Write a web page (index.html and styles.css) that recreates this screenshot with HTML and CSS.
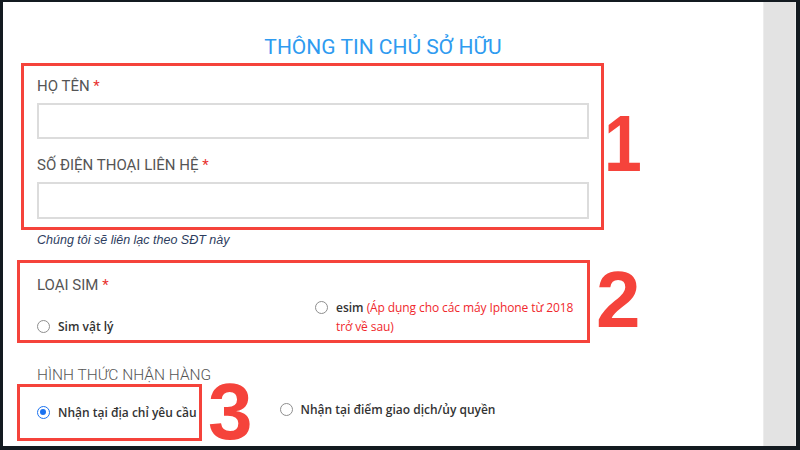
FILE: index.html
```html
<!DOCTYPE html>
<html lang="vi">
<head>
<meta charset="utf-8">
<link rel="stylesheet" href="styles.css">
</head>
<body>
<div class="frame">
  <main class="page">
    <h1 class="title">THÔNG TIN CHỦ SỞ HỮU</h1>

    <div class="row row-1">
      <section class="mark mark-1">
        <label class="lbl">HỌ TÊN <span class="req">*</span></label>
        <div class="input"></div>
        <label class="lbl lbl-2">SỐ ĐIỆN THOẠI LIÊN HỆ <span class="req">*</span></label>
        <div class="input input-2"></div>
      </section>
      <div class="num num-1">1</div>
    </div>
    <p class="hint">Chúng tôi sẽ liên lạc theo SĐT này</p>

    <div class="row row-2">
      <section class="mark mark-2">
        <label class="lbl">LOẠI SIM <span class="req">*</span></label>
        <div class="choices">
          <div class="opt opt-sim"><span class="radio"></span><span class="otext">Sim vật lý</span></div>
          <div class="opt opt-esim"><span class="radio"></span><span class="otext">esim <span class="red">(Áp dụng cho các máy Iphone từ 2018 trở về sau)</span></span></div>
        </div>
      </section>
      <div class="num num-2">2</div>
    </div>

    <div class="lbl lbl-3">HÌNH THỨC NHẬN HÀNG</div>
    <div class="row row-3">
      <section class="mark mark-3">
        <div class="opt"><span class="radio checked"></span><span class="otext">Nhận tại địa chỉ yêu cầu</span></div>
      </section>
      <div class="num num-3">3</div>
      <div class="opt opt-other"><span class="radio"></span><span class="otext">Nhận tại điểm giao dịch/ủy quyền</span></div>
    </div>
  </main>
  <aside class="side"></aside>
</div>
</body>
</html>
```
FILE: styles.css
```css
* { box-sizing: border-box; }
html, body { margin: 0; padding: 0; }
body {
  width: 800px;
  height: 450px;
  overflow: hidden;
  background: #131a20;
  font-family: Roboto, "Liberation Sans", sans-serif;
}
.frame {
  display: flex;
  height: 450px;
  padding: 2px 4px 4px 3px;
}
.page {
  width: 760px;
  background: #ffffff;
  padding-left: 14px;
  overflow: hidden;
}
.side {
  width: 33px;
  background: #e3e3e3;
  border-left: 1px solid #ececec;
  border-right: 1px solid #ececec;
}
.title {
  margin: 0 0 0 -14px;
  padding-top: 33px;
  text-align: center;
  font-weight: 400;
  font-size: 21px;
  line-height: 24px;
  color: #2f9bf0;
  height: 61px;
}
.row { display: flex; align-items: center; }
.mark { border: 3px solid #f5433b; }
.mark-1 {
  margin-left: 4px;
  width: 583px;
  padding: 11px 12px 8px 13px;
}
.lbl {
  display: block;
  font-size: 15px;
  line-height: 18px;
  color: #555555;
}
.req { color: #e8322f; }
.input {
  margin-top: 8px;
  height: 36px;
  border: 2px solid #dcdcdc;
  background: #fff;
}
.lbl-2 { margin-top: 17px; }
.input-2 { height: 37px; }
.num {
  font-family: "Liberation Sans", Arial, sans-serif;
  font-weight: 700;
  font-size: 80px;
  line-height: 1;
  color: #f5433b;
}
.num-1 { margin-left: 0px; margin-top: -6px; transform: scaleX(0.85); transform-origin: left center; }
.hint {
  margin: 3px 0 0 20px;
  font-family: "Liberation Sans", Arial, sans-serif;
  font-style: italic;
  font-size: 12.5px;
  line-height: 14px;
  color: #2d3d5e;
  height: 16px;
}
.row-2 { margin-top: 11px; }
.mark-2 {
  width: 573px;
  height: 83px;
  padding: 13px 0 0 17px;
}
.choices {
  display: flex;
  align-items: flex-end;
  margin-top: 4px;
}
.opt {
  display: flex;
  align-items: flex-start;
  font-family: "Open Sans", "Liberation Sans", sans-serif;
  font-size: 12px;
  line-height: 19px;
  color: #333333;
  font-weight: 600;
}
.opt-sim { width: 278px; }
.opt-esim { width: 270px; }
.red { color: #f0282d; font-weight: 400; letter-spacing: -0.1px; }
.radio {
  flex: none;
  width: 13px;
  height: 13px;
  margin: 3px 8px 0 0;
  border-radius: 50%;
  border: 1px solid #8e8e8e;
  background: #fff;
  position: relative;
}
.radio.checked {
  border: 1.5px solid #1b72f0;
}
.radio.checked::after {
  content: "";
  position: absolute;
  left: 2px; top: 2px;
  width: 6px; height: 6px;
  border-radius: 50%;
  background: #1b72f0;
}
.num-2 { margin-left: 6px; margin-top: -4px; }
.lbl-3 { margin: 23px 0 0 20px; font-weight: 300; font-size: 15.5px; color: #555; }
.row-3 { margin-top: 0; align-items: flex-start; }
.mark-3 {
  width: 185px;
  height: 57px;
  display: flex;
  align-items: center;
  padding-left: 17px;
}
.num-3 { margin-left: 6px; margin-top: -12px; }
.opt-other { margin-left: 27px; margin-top: 16px; }
```
